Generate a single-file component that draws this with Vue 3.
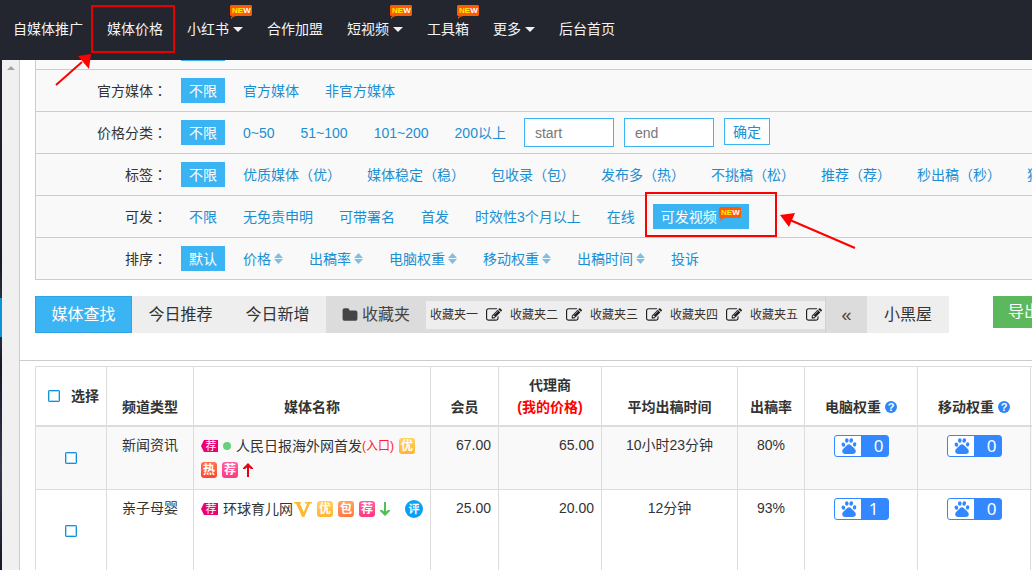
<script setup>
import { h } from 'vue'

const nav = [
  { text: '自媒体推广' },
  { text: '媒体价格' },
  { text: '小红书', caret: true, fresh: true },
  { text: '合作加盟' },
  { text: '短视频', caret: true, fresh: true },
  { text: '工具箱', fresh: true },
  { text: '更多', caret: true },
  { text: '后台首页' },
]

const filters = [
  { label: '官方媒体', items: [{ t: '不限', on: true }, { t: '官方媒体' }, { t: '非官方媒体' }] },
  {
    label: '价格分类',
    range: true,
    items: [{ t: '不限', on: true }, { t: '0~50' }, { t: '51~100' }, { t: '101~200' }, { t: '200以上' }],
  },
  {
    label: '标签',
    items: [
      { t: '不限', on: true },
      { t: '优质媒体（优）' },
      { t: '媒体稳定（稳）' },
      { t: '包收录（包）' },
      { t: '发布多（热）' },
      { t: '不挑稿（松）' },
      { t: '推荐（荐）' },
      { t: '秒出稿（秒）' },
      { t: '独家（独）' },
    ],
  },
  {
    label: '可发',
    items: [
      { t: '不限' },
      { t: '无免责申明' },
      { t: '可带署名' },
      { t: '首发' },
      { t: '时效性3个月以上' },
      { t: '在线' },
      { t: '可发视频', on: true, fresh: true },
    ],
  },
  {
    label: '排序',
    items: [
      { t: '默认', on: true },
      { t: '价格', sort: true },
      { t: '出稿率', sort: true },
      { t: '电脑权重', sort: true },
      { t: '移动权重', sort: true },
      { t: '出稿时间', sort: true },
      { t: '投诉' },
    ],
  },
]

const folders = ['收藏夹一', '收藏夹二', '收藏夹三', '收藏夹四', '收藏夹五']

const rows = [
  { type: '新闻资讯', member: '67.00', agent: '65.00', time: '10小时23分钟', rate: '80%', pc: '0', mobile: '0' },
  { type: '亲子母婴', member: '25.00', agent: '20.00', time: '12分钟', rate: '93%', pc: '1', mobile: '0' },
]

const NewTag = () =>
  h('svg', { class: 'new-tag', width: 22, height: 14, viewBox: '0 0 22 14' }, [
    h('path', { fill: '#ff5a00', d: 'M1 0h20l1 1v9l-1 1H6l-3 1-2 2v-2l2-1H1l-1-1V1z' }),
    h('text', { x: 2, y: 8, 'font-size': 8, 'font-weight': 700, 'font-family': 'Liberation Sans, sans-serif', fill: '#ffee00' }, [
      'NE',
      h('tspan', { fill: '#ffffff' }, 'W'),
    ]),
  ])

const Weight = (props) =>
  h('span', { class: 'weight' }, [
    h('svg', { width: 16, height: 16, viewBox: '0 0 16 16', fill: '#3388ff' }, [
      h('ellipse', { cx: 2.4, cy: 6.6, rx: 1.8, ry: 2.2, transform: 'rotate(-12 2.4 6.6)' }),
      h('ellipse', { cx: 5.8, cy: 2.5, rx: 1.8, ry: 2.3 }),
      h('ellipse', { cx: 10.2, cy: 2.5, rx: 1.8, ry: 2.3, transform: 'rotate(8 10.2 2.5)' }),
      h('ellipse', { cx: 13.6, cy: 6.4, rx: 1.7, ry: 2.2, transform: 'rotate(10 13.6 6.4)' }),
      h('path', { d: 'M8 6.200c1.500 0 2.200 1.200 3.300 2.300 1.500 1.500 3.500 2.800 3.500 4.700 0 1.700-1.300 2.700-3 2.700H4.200c-1.700 0-3-1-3-2.700 0-1.900 2-3.200 3.500-4.700C5.800 7.400 6.500 6.200 8 6.200z' }),
    ]),
    h('b', { class: { one: props.value === '1' } }, props.value),
  ])
Weight.props = ['value']
</script>

<template>
  <div class="page">
    <header class="top">
      <nav>
        <a v-for="n in nav" :key="n.text" href="#">
          {{ n.text }}
          <i v-if="n.caret" class="caret"></i>
          <span v-if="n.fresh" class="pin" :class="{ wide: n.caret }"><NewTag /></span>
        </a>
      </nav>
    </header>

    <div class="body">
      <aside class="side"><i class="current"></i></aside>
      <div class="track">
        <svg width="8" height="4" viewBox="0 0 8 4"><path d="M4 0l4 4H0z" fill="#a3a3a3" /></svg>
      </div>

      <main>
        <section class="filters">
          <div class="cut"><i></i></div>
          <div v-for="f in filters" :key="f.label" class="row">
            <span class="label">{{ f.label }}<span class="colon">：</span></span>
            <div class="opts">
              <a v-for="o in f.items" :key="o.t" href="#" :class="{ on: o.on }">
                {{ o.t }}
                <NewTag v-if="o.fresh" />
                <svg v-if="o.sort" class="sort" width="9" height="11" viewBox="0 0 9 11">
                  <path d="M4.500 0L9 5H0zM0 6h9l-4.500 5z" fill="#7fbfe6" />
                </svg>
              </a>
              <form v-if="f.range" class="range" @submit.prevent>
                <input type="text" placeholder="start" aria-label="start" />
                <input type="text" placeholder="end" aria-label="end" />
                <button type="submit">确定</button>
              </form>
            </div>
          </div>
        </section>

        <section class="tools">
          <button class="tab active">媒体查找</button>
          <button class="tab">今日推荐</button>
          <button class="tab">今日新增</button>
          <div class="favs">
            <button class="fav-title">
              <svg width="16" height="16" viewBox="0 0 1792 1792" fill="#444">
                <path d="M1728 608v704q0 92-66 158t-158 66h-1216q-92 0-158-66t-66-158v-960q0-92 66-158t158-66h320q92 0 158 66t66 158v32h672q92 0 158 66t66 158z" />
              </svg>
              收藏夹
            </button>
            <div class="fav-list">
              <a v-for="n in folders" :key="n" href="#">
                {{ n }}
                <svg width="16" height="16" viewBox="0 0 1792 1792" fill="#222">
                  <path d="M888 1184l116-116-152-152-116 116v56h96v96h56zm440-720q-16-16-33 1l-350 350q-17 17-1 33t33-1l350-350q17-17 1-33zm80 594v190q0 119-84.500 203.500t-203.500 84.500h-832q-119 0-203.500-84.500t-84.500-203.500v-832q0-119 84.500-203.500t203.500-84.500h832q63 0 117 25 15 7 18 23 3 17-9 29l-49 49q-14 14-32 8-23-6-45-6h-832q-66 0-113 47t-47 113v832q0 66 47 113t113 47h832q66 0 113-47t47-113v-126q0-13 9-22l64-64q15-15 35-7t20 29zm-96-738l288 288-672 672h-288v-288zm444 132l-92 92-288-288 92-92q28-28 68-28t68 28l152 152q28 28 28 68t-28 68z" />
                </svg>
              </a>
            </div>
            <button class="fold">«</button>
          </div>
          <button class="tab dark-room">小黑屋</button>
          <button class="export">导出</button>
        </section>

        <section class="list">
          <table>
            <colgroup>
              <col class="w71" /><col class="w87" /><col class="w237" /><col class="w68" /><col class="w103" />
              <col class="w136" /><col class="w67" /><col class="w113" /><col class="w113" /><col />
            </colgroup>
            <thead>
              <tr>
                <th class="pick-all">
                  <label><input type="checkbox" />选择</label>
                </th>
                <th>频道类型</th>
                <th>媒体名称</th>
                <th>会员</th>
                <th>代理商<br /><span class="red">(我的价格)</span></th>
                <th>平均出稿时间</th>
                <th>出稿率</th>
                <th><span class="ask">电脑权重<i>?</i></span></th>
                <th><span class="ask">移动权重<i>?</i></span></th>
                <th></th>
              </tr>
            </thead>
            <tbody>
              <tr v-for="(r, i) in rows" :key="r.type" :class="{ tall: i === 1 }">
                <td class="pick"><input type="checkbox" :aria-label="r.type" /></td>
                <td>{{ r.type }}</td>
                <td class="name">
                  <div v-if="i === 0" class="marks">
                    <span class="flag">荐</span>
                    <i class="dot"></i>
                    <span class="title">人民日报海外网首发<a href="#" class="entry">(入口)</a></span>
                    <span class="badge gold">优</span>
                    <span class="badge hot">热</span>
                    <span class="badge pink">荐</span>
                    <svg width="10" height="14" viewBox="0 0 10 14"><path d="M5 0l5 5v1H8L6 4.500V14H4V4.500L2 6H0V5z" fill="#e60012" /></svg>
                  </div>
                  <div v-else class="marks">
                    <span class="flag">荐</span>
                    <span class="title">环球育儿网<svg width="18" height="15" viewBox="0 0 18 15"><path d="M0 0h7v1.500H5.800l4 8.500 3.400-8.500H11V0h7v1.500h-2L10.300 15H8.200L2 1.500H0z" fill="#fdb933" /></svg></span>
                    <span class="badge gold">优</span>
                    <span class="badge orange">包</span>
                    <span class="badge pink">荐</span>
                    <svg width="10" height="14" viewBox="0 0 10 14"><path d="M5 14L0 9V8h2l2 1.500V0h2v9.500L8 8h2v1z" fill="#4fc153" /></svg>
                    <span class="review">评</span>
                  </div>
                </td>
                <td class="num">{{ r.member }}</td>
                <td class="num">{{ r.agent }}</td>
                <td>{{ r.time }}</td>
                <td>{{ r.rate }}</td>
                <td class="rank"><Weight :value="r.pc" /></td>
                <td class="rank"><Weight :value="r.mobile" /></td>
                <td></td>
              </tr>
            </tbody>
          </table>
        </section>
      </main>
    </div>

    <svg class="notes" width="880" height="260" viewBox="0 0 880 260" fill="none" stroke="#f00" stroke-width="2">
      <rect x="92" y="6" width="82" height="46" stroke="#e80000" />
      <path d="M56 85l26-23" />
      <path d="M91 54L78 56l11 13z" fill="#f00" stroke="none" />
      <rect x="646" y="193" width="130" height="43" />
      <path d="M855 248l-65-28" />
      <path d="M780 215l15-2-6 14z" fill="#f00" stroke="none" />
    </svg>
  </div>
</template>

<style>
body {
  margin: 0;
  font: 14px/22px 'Liberation Sans', 'Noto Sans CJK SC', sans-serif;
  color: #333;
}
.new-tag {
  display: block;
  flex: none;
}
.weight {
  box-sizing: border-box;
  display: inline-flex;
  align-items: center;
  width: 55px;
  height: 22px;
  padding-left: 6px;
  border: 1px solid #3388ff;
  border-radius: 3px;
  background: linear-gradient(to right, #fff 26px, #3388ff 26px);
  vertical-align: top;
}
.weight b {
  flex: 1;
  padding-right: 4px;
  font: 17px/20px 'Noto Sans', sans-serif;
  color: #fff;
  text-align: right;
}
.weight b.one {
  padding-right: 9px;
}
</style>

<style scoped>
* {
  box-sizing: border-box;
}
a {
  text-decoration: none;
  color: inherit;
}
button {
  font: inherit;
  border: 0;
  padding: 0;
  cursor: pointer;
}
.page {
  position: relative;
  display: flex;
  flex-direction: column;
  height: 100vh;
  overflow: hidden;
}
.top {
  flex: none;
  height: 60px;
  background: #23262e;
}
nav {
  display: flex;
  gap: 24px;
  height: 58px;
  padding-left: 13px;
}
nav a {
  position: relative;
  display: flex;
  align-items: center;
  gap: 4px;
  white-space: nowrap;
  color: #f4f4f4;
}
.caret {
  border: 5px solid transparent;
  border-top-color: #f0f0f0;
  border-bottom: 0;
}
.pin {
  position: absolute;
  top: 5px;
  right: -10px;
}
.pin.wide {
  right: -9px;
}
.body {
  flex: 1;
  display: flex;
  min-height: 0;
}
.side {
  flex: none;
  width: 2px;
  padding-top: 238px;
  background: linear-gradient(#20222e, #181b28 40%, #34384c 50%, #151826 60%, #34384c 80%, #151826);
}
.current {
  display: block;
  height: 39px;
  background: #0a94dc;
}
.track {
  flex: none;
  width: 18px;
  padding: 6px 0 0 5px;
  background: #f0f0f0;
  border-right: 1px solid #ccc;
}
.track svg {
  display: block;
}
main {
  flex: 1;
  min-width: 0;
  overflow: hidden;
}
.filters {
  margin-left: 15px;
  border-left: 1px solid #ccc;
  background: #f9f9f9;
}
.cut {
  height: 10px;
  padding-left: 145px;
  border-bottom: 1px solid #ccc;
}
.cut i {
  display: block;
  width: 44px;
  height: 1px;
  background: #3ab4f2;
}
.row {
  display: flex;
  align-items: center;
  gap: 14px;
  height: 42px;
  border-bottom: 1px solid #ccc;
}
.label {
  flex: none;
  width: 131px;
  text-align: right;
}
.colon {
  font-family: 'Noto Sans CJK TC', sans-serif;
}
.opts {
  display: flex;
  align-items: center;
  gap: 10px;
  white-space: nowrap;
}
.opts a {
  display: flex;
  align-items: center;
  gap: 3px;
  height: 25px;
  padding: 0 8px;
  color: #1a8fd3;
}
.opts a.on {
  gap: 2px;
  background: #3ab4f2;
  color: #fff;
}
.opts .new-tag {
  margin-bottom: 6px;
}
.range {
  display: flex;
  gap: 10px;
}
.range input {
  width: 90px;
  height: 29px;
  padding: 0 10px;
  border: 1px solid #3ab4f2;
  background: #fff;
  font: inherit;
}
.range input::placeholder {
  color: #777;
}
.range button {
  width: 46px;
  height: 27px;
  border: 1px solid #3ab4f2;
  background: #fff;
  color: #1a8fd3;
}
.tools {
  display: flex;
  align-items: flex-start;
  padding: 16px 0 27px 15px;
  border-bottom: 1px solid #ccc;
  white-space: nowrap;
}
.tab {
  flex: none;
  width: 97px;
  height: 37px;
  background: #eee;
  color: #333;
  font-size: 16px;
}
.tab.active {
  border: 1px solid #2fa4e7;
  background: #3ab4f2;
  color: #fff;
}
.tab.dark-room {
  width: 82px;
}
.favs {
  flex: none;
  display: flex;
  align-items: center;
  height: 37px;
  background: #dcdcdc;
}
.fav-title {
  display: flex;
  align-items: center;
  gap: 4px;
  padding: 0 16px;
  background: none;
  color: #444;
  font-size: 16px;
}
.fav-list {
  display: flex;
  align-items: center;
  gap: 8px;
  height: 28px;
  padding: 0 3px 0 4px;
  background: #eee;
  font-size: 12px;
}
.fav-list a {
  display: flex;
  align-items: center;
  gap: 8px;
}
.fold {
  width: 42px;
  height: 37px;
  border-left: 1px solid #d2d2d2;
  background: #dcdcdc;
  color: #444;
  font-size: 18px;
}
.export {
  flex: none;
  height: 32px;
  margin-left: 44px;
  padding: 0 15px;
  background: #5cb85c;
  color: #fff;
  font-size: 16px;
}
.list {
  padding: 5px 0 0 15px;
}
table {
  table-layout: fixed;
  width: 1076px;
  min-width: 100%;
  border-spacing: 0;
  border-top: 1px solid #ddd;
  border-left: 1px solid #ddd;
}
.w67 { width: 67px; }
.w68 { width: 68px; }
.w71 { width: 71px; }
.w87 { width: 87px; }
.w103 { width: 103px; }
.w113 { width: 113px; }
.w136 { width: 136px; }
.w237 { width: 237px; }
th,
td {
  border-right: 1px solid #ddd;
  border-bottom: 1px solid #ddd;
  text-align: center;
  white-space: nowrap;
}
th {
  padding: 7px 0;
  border-bottom-width: 2px;
  vertical-align: bottom;
}
td {
  padding: 7px;
  vertical-align: top;
}
td.rank {
  padding-top: 8px;
}
tbody tr:first-child {
  background: #f9f9f9;
}
.tall {
  height: 82px;
}
.pick-all {
  padding-left: 12px;
  vertical-align: middle;
}
.pick-all label {
  display: flex;
  align-items: center;
  gap: 11px;
}
td.pick {
  vertical-align: middle;
}
input[type='checkbox'] {
  appearance: none;
  display: block;
  width: 12px;
  height: 12px;
  margin: 0;
  border: 1px solid #1493dc;
  border-radius: 1px;
  background: #fff;
  box-shadow: inset 0 0 0 1px #a9d8f4;
}
.pick input {
  margin: 0 auto;
}
.red {
  color: #f00;
}
.ask {
  display: inline-flex;
  align-items: center;
  gap: 4px;
}
.ask i {
  width: 12px;
  height: 12px;
  border-radius: 50%;
  background: #2d85f7;
  color: #fff;
  font: 700 11px/12px 'Liberation Sans', sans-serif;
}
.num {
  text-align: right;
}
td.name {
  padding-right: 4px;
}
.marks {
  display: flex;
  flex-wrap: wrap;
  align-items: center;
  gap: 0 5px;
}
.flag {
  width: 17px;
  padding-left: 3px;
  background: #ec0074;
  clip-path: polygon(3px 0, 100% 0, 100% 100%, 3px 100%, 0 50%);
  color: #fff;
  font-size: 11px;
  line-height: 12px;
}
.dot {
  width: 8px;
  height: 8px;
  border-radius: 50%;
  background: #66d17c;
}
.title {
  display: flex;
  align-items: center;
  height: 24px;
}
.title svg {
  margin-left: 1px;
}
.entry {
  color: #f22;
  font-size: 12px;
}
.badge {
  width: 16px;
  height: 16px;
  margin: 4px 0;
  border-radius: 3px;
  color: #fff;
  font-size: 12px;
  font-weight: 700;
  line-height: 16px;
}
.gold { background: linear-gradient(#ffd262, #ffb52e); }
.hot { background: linear-gradient(#ff7352, #ff4530); }
.pink { background: linear-gradient(#ff5f9e, #ff3a80); }
.orange { background: linear-gradient(#ffa25e, #ff7a45); }
.review {
  width: 18px;
  height: 18px;
  margin-left: 10px;
  border-radius: 50%;
  background: #08a0f4;
  color: #fff;
  font-size: 11px;
  font-weight: 700;
  line-height: 18px;
}
.notes {
  position: absolute;
  top: 0;
  left: 0;
  pointer-events: none;
}
</style>
